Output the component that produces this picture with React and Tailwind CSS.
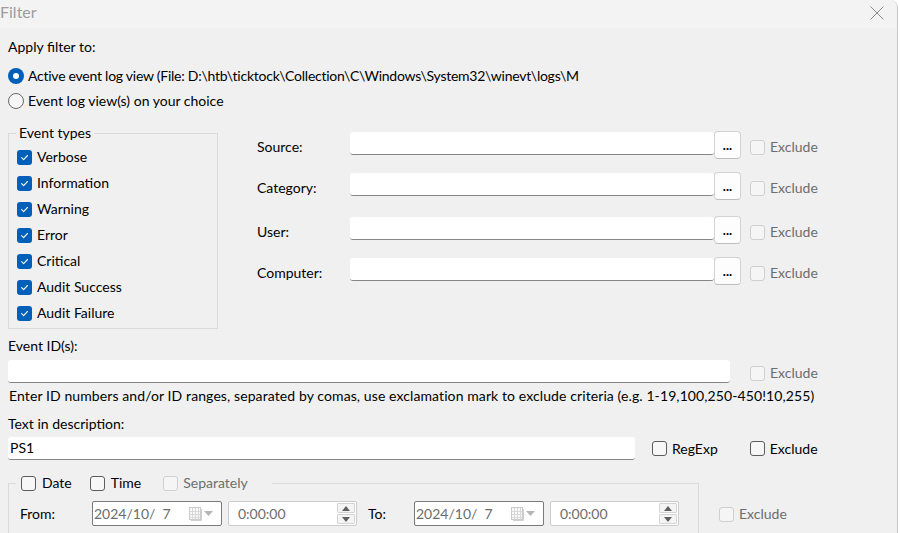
import React from "react";

const eventTypes = ["Verbose", "Information", "Warning", "Error", "Critical", "Audit Success", "Audit Failure"];

const fields = [
  { label: "Source:", gap: "mt-[8px]" },
  { label: "Category:", gap: "mt-[13px]" },
  { label: "User:", gap: "mt-[16px]" },
  { label: "Computer:", gap: "mt-[13px]" },
];

function Check({ checked, disabled }) {
  if (checked) {
    return (
      <span className="flex h-[15px] w-[15px] shrink-0 items-center justify-center rounded-[3px] bg-[#005fb8]">
        <svg width="9" height="9" viewBox="0 0 9 9" fill="none">
          <path d="M1.6 4.7 L3.6 6.6 L7.5 2.5" stroke="white" strokeWidth="1.1" strokeLinecap="round" strokeLinejoin="round" />
        </svg>
      </span>
    );
  }
  return (
    <span
      className={
        disabled
          ? "block h-[15px] w-[15px] shrink-0 rounded-[3px] border border-[#cfcfcf] bg-[#f5f5f5]"
          : "block h-[15px] w-[15px] shrink-0 rounded-[3px] border border-[#5c5c5c] bg-[#f7f7f7]"
      }
    />
  );
}

function Radio({ selected }) {
  if (selected) {
    return (
      <span className="flex h-[16px] w-[16px] shrink-0 items-center justify-center rounded-full bg-[#005fb8]">
        <span className="h-[6px] w-[6px] rounded-full bg-white" />
      </span>
    );
  }
  return <span className="block h-[16px] w-[16px] shrink-0 rounded-full border border-[#6b6b6b] bg-[#f6f6f6]" />;
}

function DateBox() {
  return (
    <div className="flex h-[25px] w-[130px] items-center rounded-[2px] border border-[#7a7a7a] bg-white pr-[8px] text-[#6d6d6d]">
      <span className="whitespace-pre pl-[1px]">2024/10/  7</span>
      <svg className="ml-auto" width="13" height="14" viewBox="0 0 13 14" fill="none">
        <rect x="0.5" y="0.5" width="11" height="12" fill="#f8f8f8" stroke="#c9c9c9" />
        <path d="M0.5 4.5 H11.5 M0.5 7.5 H11.5 M0.5 10.5 H11.5 M3.5 0.5 V12.5 M6.5 0.5 V12.5 M9.5 0.5 V12.5" stroke="#d9d9d9" />
        <path d="M12.5 2 V13.5 H2" stroke="#d0d0d0" />
      </svg>
      <svg className="ml-[2px]" width="9" height="6" viewBox="0 0 9 6">
        <path d="M0 0 H9 L4.5 5 Z" fill="#b5b5b5" />
      </svg>
    </div>
  );
}

function TimeBox() {
  return (
    <div className="flex h-[25px] w-[129px] items-center rounded-[2px] border border-[#cccccc] bg-white pr-[1px] text-[#6d6d6d]">
      <span className="pl-[9px]">0:00:00</span>
      <div className="ml-auto flex flex-col gap-[1px]">
        <span className="flex h-[10px] w-[18px] items-center justify-center rounded-[1px] border border-[#d4d4d4] bg-[#f4f4f4]">
          <svg width="8" height="5" viewBox="0 0 8 5"><path d="M0 5 L4 0 L8 5 Z" fill="#606060" /></svg>
        </span>
        <span className="flex h-[10px] w-[18px] items-center justify-center rounded-[1px] border border-[#d4d4d4] bg-[#f4f4f4]">
          <svg width="8" height="5" viewBox="0 0 8 5"><path d="M0 0 L8 0 L4 5 Z" fill="#606060" /></svg>
        </span>
      </div>
    </div>
  );
}

export default function App() {
  return (
    <div className="h-[533px] w-[900px] overflow-hidden bg-white font-['Lato','Liberation_Sans',sans-serif] text-[14px] leading-[20px] text-black">
      <div className="flex h-full w-[898px] flex-col overflow-hidden rounded-tr-[8px] border-r border-[#c6c6c6] bg-[#f0f0f0]">
        <div className="flex h-[28px] shrink-0 items-start justify-between bg-[#f3f3f3]">
          <span className="mt-[2px] text-[16px] text-[#9d9d9d]">Filter</span>
          <svg className="mr-[13px] mt-[6px]" width="14" height="14" viewBox="0 0 14 14">
            <path d="M0.5 0.5 L13.5 13.5 M13.5 0.5 L0.5 13.5" stroke="#8a8a8a" strokeWidth="1" />
          </svg>
        </div>

        <div className="flex flex-col px-[8px]">
          <div className="mt-[9px]">Apply filter to:</div>
          <div className="mt-[9px] flex items-center gap-[4px]">
            <Radio selected />
            <span className="whitespace-nowrap tracking-[-0.25px]">Active event log view (File: D:\htb\ticktock\Collection\C\Windows\System32\winevt\logs\M</span>
          </div>
          <div className="mt-[5px] flex items-center gap-[4px]">
            <Radio />
            <span>Event log view(s) on your choice</span>
          </div>

          <div className="mt-[12px] flex items-start">
            <fieldset className="w-[210px] border border-[#dadada] pb-[2px] pl-[8px]">
              <legend className="ml-[-1px] px-[3px] leading-[20px]">Event types</legend>
              <div className="mt-[1px] flex flex-col">
                {eventTypes.map((t) => (
                  <div key={t} className="flex h-[26px] items-center gap-[5px]">
                    <Check checked />
                    <span>{t}</span>
                  </div>
                ))}
              </div>
            </fieldset>

            <div className="ml-[39px] flex flex-col">
              {fields.map((f) => (
                <div key={f.label} className={"flex items-start " + f.gap}>
                  <span className="mt-[6px] w-[93px]">{f.label}</span>
                  <div className="mt-[1px] h-[23px] w-[364px] rounded-[3px] border-b border-[#868686] bg-white" />
                  <button className="flex h-[28px] w-[27px] items-end justify-center rounded-[4px] border border-[#d3d3d3] border-b-[#bdbdbd] bg-[#fdfdfd] pb-[6px] text-[13px] leading-[13px] font-bold">
                    ...
                  </button>
                  <span className="ml-[9px] mt-[9px]"><Check disabled /></span>
                  <span className="ml-[5px] mt-[6px] text-[#6d6d6d]">Exclude</span>
                </div>
              ))}
            </div>
          </div>

          <div className="mt-[7px]">Event ID(s):</div>
          <div className="mt-[4px] flex items-center">
            <div className="h-[23px] w-[722px] rounded-[3px] border-b border-[#868686] bg-white" />
            <span className="ml-[20px] mt-[3px]"><Check disabled /></span>
            <span className="ml-[5px] mt-[3px] text-[#6d6d6d]">Exclude</span>
          </div>
          <div className="mt-[3px] whitespace-nowrap pl-[1px] tracking-[0.1px]">
            Enter ID numbers and/or ID ranges, separated by comas, use exclamation mark to exclude criteria (e.g. 1-19,100,250-450!10,255)
          </div>

          <div className="mt-[8px]">Text in description:</div>
          <div className="mt-[3px] flex items-center">
            <div className="flex h-[23px] w-[627px] items-center rounded-[3px] border-b border-[#868686] bg-white pl-[2px]">PS1</div>
            <span className="ml-[17px]"><Check /></span>
            <span className="ml-[5px]">RegExp</span>
            <span className="ml-[32px]"><Check /></span>
            <span className="ml-[5px]">Exclude</span>
          </div>

          <div className="mt-[13px] flex items-start">
            <fieldset className="h-[90px] w-[691px] shrink-0 border border-[#dadada] pl-[11px]">
              <legend className="ml-[-4px] flex items-center pl-[5px] pr-[24px]">
                <Check />
                <span className="ml-[6px]">Date</span>
                <span className="ml-[18px]"><Check /></span>
                <span className="ml-[6px]">Time</span>
                <span className="ml-[22px]"><Check disabled /></span>
                <span className="ml-[5px] text-[#6d6d6d]">Separately</span>
              </legend>
              <div className="mt-[8px] flex items-center">
                <span className="w-[72px]">From:</span>
                <DateBox />
                <span className="ml-[6px]"><TimeBox /></span>
                <span className="ml-[11px] w-[46px]">To:</span>
                <DateBox />
                <span className="ml-[6px]"><TimeBox /></span>
              </div>
            </fieldset>
            <div className="ml-[20px] mt-[31px] flex items-center">
              <Check disabled />
              <span className="ml-[5px] text-[#6d6d6d]">Exclude</span>
            </div>
          </div>
        </div>
      </div>
    </div>
  );
}
